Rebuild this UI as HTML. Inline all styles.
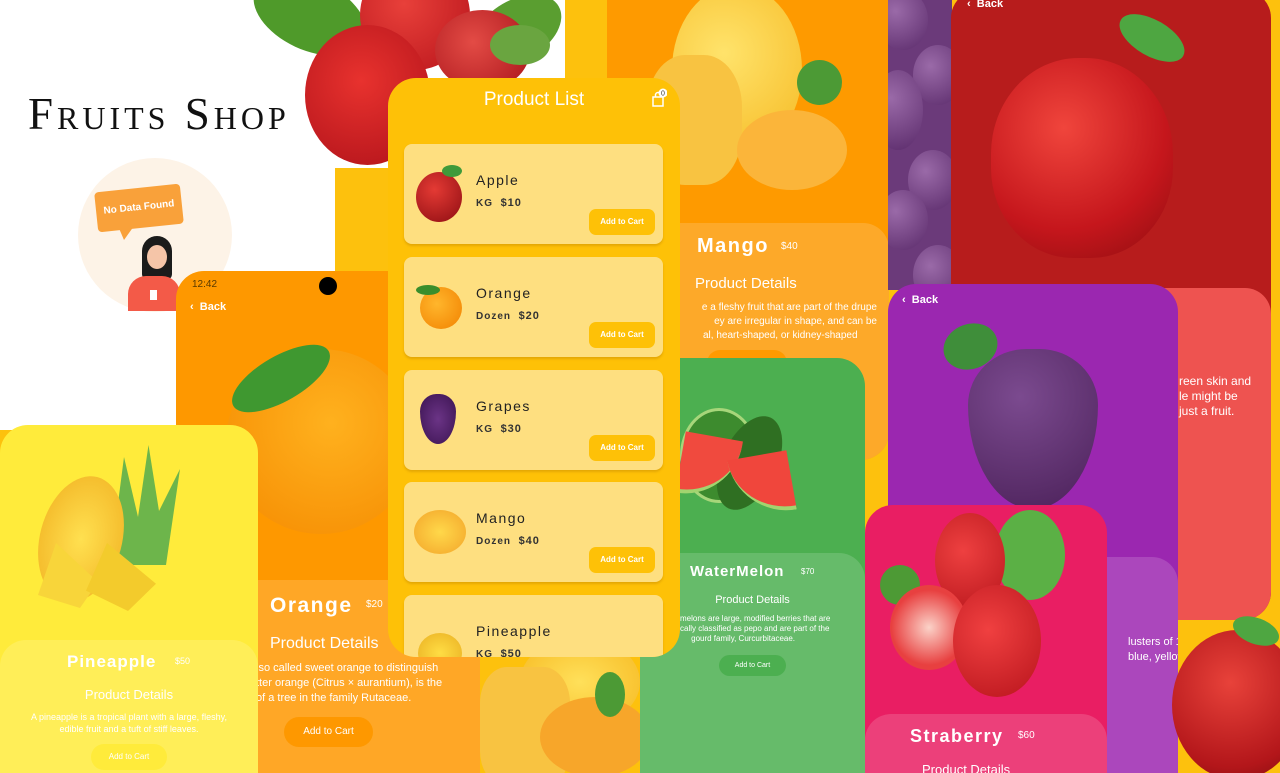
<!DOCTYPE html>
<html style="overflow:hidden;width:1280px;height:773px"><head><meta charset="utf-8"><style>
*{margin:0;padding:0;box-sizing:border-box}
body{width:1280px;height:773px;overflow:hidden;position:relative;background:#fdc10d;font-family:"Liberation Sans",sans-serif}
.a{position:absolute}
.card{position:absolute;overflow:hidden;border-radius:28px}
.panel{position:absolute;left:0;right:0;bottom:0;border-radius:26px 26px 0 0}
.c{text-align:center;color:#fff}
.ball{position:absolute;border-radius:50%}
.item{position:absolute;left:16px;width:259px;height:100px;background:#fedf80;border-radius:8px;box-shadow:0 2px 2px rgba(180,120,0,.35)}
.item .n{position:absolute;left:72px;top:28px;font-size:14px;letter-spacing:1.5px;color:#222}
.item .p{position:absolute;left:72px;top:53px;font-size:10px;letter-spacing:1px;color:#333;font-weight:bold}
.item .p b{font-size:11px}
.btn{position:absolute;right:8px;top:65px;width:66px;height:26px;background:#fec107;border-radius:7px;color:#fff;font-size:8px;font-weight:bold;text-align:center;line-height:26px}
</style></head><body>
<div class="a" style="left:0;top:0;width:335px;height:430px;background:#fff"></div>
<div class="a" style="left:335px;top:0;width:230px;height:168px;background:#fff"></div>

<div class="a" style="left:240px;top:0;width:330px;height:165px">
 <div class="ball" style="left:10px;top:-20px;width:120px;height:70px;background:#4f9a2a;transform:rotate(25deg)"></div>
 <div class="ball" style="left:230px;top:0;width:95px;height:60px;background:#5a9e30;transform:rotate(-30deg)"></div>
 <div class="ball" style="left:120px;top:-40px;width:110px;height:110px;background:radial-gradient(circle at 40% 40%,#e8403a,#b8141b)"></div>
 <div class="ball" style="left:195px;top:10px;width:95px;height:80px;background:radial-gradient(circle at 40% 40%,#e34b45,#a9141a)"></div>
 <div class="ball" style="left:65px;top:25px;width:125px;height:140px;background:radial-gradient(circle at 45% 40%,#e8322e,#b0121a)"></div>
 <div class="ball" style="left:250px;top:25px;width:60px;height:40px;background:#6aa540"></div>
</div>

<div class="a" style="left:28px;top:88px;font-family:'Liberation Serif',serif;font-size:45px;letter-spacing:4px;font-variant:small-caps;color:#111;white-space:nowrap">Fruits Shop</div>

<div class="ball" style="left:78px;top:158px;width:154px;height:154px;background:#fdf3e7"></div>
<div class="a" style="left:96px;top:188px;width:86px;height:40px;background:#f9a13a;border-radius:4px;transform:rotate(-6deg);color:#fff;font-size:10px;font-weight:bold;line-height:40px;text-align:center">No Data Found</div>
<div class="a" style="left:118px;top:226px;width:0;height:0;border-left:6px solid transparent;border-right:10px solid transparent;border-top:14px solid #f9a13a"></div>
<div class="ball" style="left:142px;top:236px;width:30px;height:44px;background:#1b1b1b;border-radius:15px 15px 6px 6px"></div>
<div class="ball" style="left:147px;top:245px;width:20px;height:24px;background:#f5c5a8"></div>
<div class="a" style="left:128px;top:276px;width:52px;height:35px;background:#f35a48;border-radius:18px 18px 0 0"></div>
<div class="a" style="left:150px;top:290px;width:7px;height:10px;background:#fff"></div>

<div class="card" style="left:607px;top:0;width:282px;height:460px;background:#fe9a00;border-radius:0 0 28px 28px">
 <div class="ball" style="left:65px;top:-15px;width:130px;height:170px;background:radial-gradient(circle at 40% 40%,#ffe36b,#f5b820)"></div>
 <div class="ball" style="left:190px;top:60px;width:45px;height:45px;background:#4c9a35"></div>
 <div class="ball" style="left:40px;top:55px;width:95px;height:130px;background:#f8c341;border-radius:40%"></div>
 <div class="ball" style="left:130px;top:110px;width:110px;height:80px;background:#fbb53a"></div>
 <div class="panel" style="top:223px;background:#fda929">
  <div class="a" style="left:90px;top:12px;font-size:20px;font-weight:bold;letter-spacing:1.5px;color:#fff">Mango</div>
  <div class="a" style="left:174px;top:18px;font-size:10px;color:#fff">$40</div>
  <div class="a" style="left:88px;top:52px;font-size:15px;color:#fff">Product Details</div>
  <div class="a" style="top:78px;font-size:10px;line-height:14px;color:#fff;text-align:right;white-space:nowrap;left:-30px;width:300px">e a fleshy fruit that are part of the drupe<br>ey are irregular in shape, and can be<br>al, heart-shaped, or kidney-shaped&nbsp;&nbsp;&nbsp;&nbsp;&nbsp;&nbsp;&nbsp;</div>
  <div class="a" style="left:100px;top:127px;width:80px;height:26px;border-radius:14px;background:#fe9a00"></div>
 </div>
</div>

<div class="a" style="left:888px;top:0;width:64px;height:290px;background:#6b3a7a;overflow:hidden">
 <div class="ball" style="left:-10px;top:-10px;width:50px;height:60px;background:radial-gradient(circle at 35% 35%,#9a6aa8,#5a2a6a)"></div>
 <div class="ball" style="left:25px;top:45px;width:50px;height:60px;background:radial-gradient(circle at 35% 35%,#9a6aa8,#5a2a6a)"></div>
 <div class="ball" style="left:-15px;top:70px;width:50px;height:80px;background:radial-gradient(circle at 35% 35%,#9a6aa8,#5a2a6a)"></div>
 <div class="ball" style="left:20px;top:150px;width:50px;height:60px;background:radial-gradient(circle at 35% 35%,#9a6aa8,#5a2a6a)"></div>
 <div class="ball" style="left:-10px;top:190px;width:50px;height:60px;background:radial-gradient(circle at 35% 35%,#9a6aa8,#5a2a6a)"></div>
 <div class="ball" style="left:25px;top:245px;width:50px;height:60px;background:radial-gradient(circle at 35% 35%,#9a6aa8,#5a2a6a)"></div>
</div>

<div class="card" style="left:951px;top:-10px;width:320px;height:630px;background:#b71c1c">
 <div class="a" style="left:16px;top:8px;font-size:11px;font-weight:bold;color:#fff">‹&nbsp;&nbsp;Back</div>
 <div class="ball" style="left:40px;top:68px;width:182px;height:200px;background:radial-gradient(circle at 40% 35%,#f0453c,#c5161c 60%,#8d0e10);border-radius:48% 48% 45% 45%"></div>
 <div class="ball" style="left:165px;top:30px;width:72px;height:36px;background:#4ea641;transform:rotate(30deg)"></div>
 <div class="panel" style="top:298px;background:#ee5350">
  <div class="a" style="left:228px;top:86px;font-size:12px;line-height:15px;color:#fff;white-space:nowrap">reen skin and<br>le might be<br>just a fruit.</div>
 </div>
</div>

<div class="card" style="left:888px;top:284px;width:290px;height:489px;background:#9b27b0;border-radius:28px 28px 0 0">
 <div class="a" style="left:14px;top:10px;font-size:11px;font-weight:bold;color:#fff">‹&nbsp;&nbsp;Back</div>
 <div class="ball" style="left:55px;top:40px;width:55px;height:45px;background:#3f8e3a;transform:rotate(-20deg)"></div>
 <div class="a" style="left:80px;top:65px;width:130px;height:160px;background:radial-gradient(circle at 40% 30%,#7b4a8f,#4a2058);border-radius:45% 45% 50% 50%/35% 35% 65% 65%"></div>
 <div class="panel" style="top:273px;background:#ab47bc">
  <div class="a" style="left:240px;top:78px;font-size:11px;line-height:15px;color:#fff;white-space:nowrap">lusters of 15<br>blue, yellow,</div>
 </div>
</div>

<div class="ball" style="left:1172px;top:630px;width:130px;height:150px;background:radial-gradient(circle at 45% 35%,#e8423a,#b3161a 70%,#7d0d0e)"></div>
<div class="ball" style="left:1232px;top:618px;width:48px;height:26px;background:#4ea641;transform:rotate(20deg)"></div>

<div class="card" style="left:176px;top:271px;width:304px;height:502px;background:#fe9800;border-radius:28px 0 0 0">
 <div class="a" style="left:16px;top:8px;font-size:10px;color:#5a3a00">12:42</div>
 <div class="ball" style="left:143px;top:6px;width:18px;height:18px;background:#000"></div>
 <div class="a" style="left:14px;top:30px;font-size:11px;font-weight:bold;color:#fff">‹&nbsp;&nbsp;Back</div>
 <div class="ball" style="left:50px;top:78px;width:190px;height:185px;background:radial-gradient(circle at 55% 40%,#ffb11e,#f58a00)"></div>
 <div class="ball" style="left:50px;top:85px;width:110px;height:45px;background:#3f9830;transform:rotate(-30deg)"></div>
 <div class="panel" style="top:309px;background:#ffa726;border-radius:0">
  <div class="a" style="left:94px;top:14px;font-size:21px;font-weight:bold;letter-spacing:1.5px;color:#fff">Orange</div>
  <div class="a" style="left:190px;top:19px;font-size:10px;color:#fff">$20</div>
  <div class="a" style="left:94px;top:55px;font-size:16px;color:#fff">Product Details</div>
  <div class="a" style="left:80px;top:81px;font-size:11px;line-height:15px;color:#fff;white-space:nowrap">lso called sweet orange to distinguish<br>tter orange (Citrus × aurantium), is the<br>of a tree in the family Rutaceae.</div>
  <div class="a" style="left:108px;top:137px;width:89px;height:30px;border-radius:15px;background:#fe9800;color:#fff;font-size:10px;line-height:30px;text-align:center">Add to Cart</div>
 </div>
</div>

<div class="a" style="left:480px;top:657px;width:160px;height:116px;background:#fdc10d;overflow:hidden">
 <div class="ball" style="left:40px;top:-20px;width:120px;height:90px;background:radial-gradient(#ffe05a,#f6b820)"></div>
 <div class="ball" style="left:0;top:10px;width:90px;height:120px;background:#f8c341;border-radius:30%"></div>
 <div class="ball" style="left:60px;top:40px;width:110px;height:80px;background:#f7a62a"></div>
 <div class="ball" style="left:115px;top:15px;width:30px;height:45px;background:#4c9a35"></div>
</div>

<div class="card" style="left:0;top:425px;width:258px;height:348px;background:#ffeb3b;border-radius:28px 28px 0 0">
 <div class="a" style="left:110px;top:20px;width:70px;height:120px;background:#6db54b;clip-path:polygon(0 100%,20% 10%,40% 60%,55% 0,70% 55%,100% 20%,80% 100%)"></div>
 <div class="ball" style="left:40px;top:50px;width:82px;height:128px;background:radial-gradient(#ffe050,#f1b020);transform:rotate(15deg)"></div>
 <div class="a" style="left:38px;top:118px;width:60px;height:65px;background:#f8d53a;clip-path:polygon(30% 0,100% 60%,70% 100%,0 80%)"></div>
 <div class="a" style="left:86px;top:118px;width:70px;height:68px;background:#f3cb2c;clip-path:polygon(30% 0,100% 60%,60% 100%,0 70%)"></div>
 <div class="panel" style="top:215px;background:#ffee58">
  <div class="a" style="left:67px;top:12px;font-size:17px;font-weight:bold;letter-spacing:1px;color:#fff">Pineapple</div>
  <div class="a" style="left:175px;top:16px;font-size:9px;color:#fff">$50</div>
  <div class="c a" style="left:0;width:258px;top:47px;font-size:13px">Product Details</div>
  <div class="c a" style="left:0;width:258px;top:71px;font-size:9px;line-height:12px">A pineapple is a tropical plant with a large, fleshy,<br>edible fruit and a tuft of stiff leaves.</div>
  <div class="a" style="left:91px;top:104px;width:76px;height:26px;border-radius:13px;background:#ffeb3b;color:#fff;font-size:8px;line-height:26px;text-align:center">Add to Cart</div>
 </div>
</div>

<div class="card" style="left:640px;top:358px;width:225px;height:415px;background:#4caf50;border-radius:28px 28px 0 0">
 <div class="ball" style="left:40px;top:50px;width:78px;height:95px;background:#3d8b2e;border:3px solid #a7d67a"></div>
 <div class="ball" style="left:82px;top:55px;width:55px;height:100px;background:#2f6f22;transform:rotate(25deg)"></div>
 <div class="a" style="left:40px;top:78px;width:58px;height:62px;background:#f04a3e;border-radius:0 0 60px 0;border-bottom:4px solid #a2d46f;transform:rotate(10deg)"></div>
 <div class="a" style="left:92px;top:97px;width:60px;height:60px;background:#f0463c;border-radius:0 0 0 60px;border-bottom:4px solid #a2d46f;transform:rotate(-10deg)"></div>
 <div class="panel" style="top:195px;background:#66bb6a">
  <div class="a" style="left:50px;top:10px;font-size:15px;font-weight:bold;letter-spacing:1px;color:#fff">WaterMelon</div>
  <div class="a" style="left:161px;top:14px;font-size:8px;color:#fff">$70</div>
  <div class="c a" style="left:0;width:225px;top:41px;font-size:11px">Product Details</div>
  <div class="a" style="left:40px;top:61px;font-size:8px;line-height:10px;white-space:nowrap;color:#fff">melons are large, modified berries that are<br>cally classified as pepo and are part of the<br>&nbsp;&nbsp;&nbsp;&nbsp;&nbsp;gourd family, Curcurbitaceae.</div>
  <div class="a" style="left:79px;top:102px;width:67px;height:21px;border-radius:11px;background:#4caf50;color:#fff;font-size:7px;line-height:21px;text-align:center">Add to Cart</div>
 </div>
</div>

<div class="card" style="left:388px;top:78px;width:292px;height:579px;background:#fec107">
 <div class="a" style="left:0;width:292px;top:11px;text-align:center;color:#fff;font-size:19px">Product List</div>
 <svg class="a" style="left:263px;top:10px" width="16" height="20" viewBox="0 0 16 20"><path d="M2 9h10v9H2z" fill="none" stroke="#fff" stroke-width="1.5"/><path d="M4.5 9V7a2.5 2.5 0 015 0v2" fill="none" stroke="#fff" stroke-width="1.5"/><circle cx="12" cy="5" r="4.5" fill="#fff"/><text x="12" y="7.5" font-size="7" text-anchor="middle" fill="#333" font-family="Liberation Sans">0</text></svg>
 <div class="item" style="top:66px">
  <div class="ball" style="left:12px;top:28px;width:46px;height:50px;background:radial-gradient(circle at 40% 35%,#e43a34,#8e0d12)"></div>
  <div class="ball" style="left:38px;top:21px;width:20px;height:12px;background:#3f9a3a"></div>
  <div class="n">Apple</div><div class="p">KG&nbsp;&nbsp;<b>$10</b></div><div class="btn">Add to Cart</div></div>
 <div class="item" style="top:179px">
  <div class="ball" style="left:16px;top:30px;width:42px;height:42px;background:radial-gradient(circle at 40% 40%,#ffb62c,#f28200)"></div>
  <div class="ball" style="left:12px;top:28px;width:24px;height:10px;background:#3a8e2c"></div>
  <div class="n">Orange</div><div class="p">Dozen&nbsp;&nbsp;<b>$20</b></div><div class="btn">Add to Cart</div></div>
 <div class="item" style="top:292px">
  <div class="ball" style="left:16px;top:24px;width:36px;height:50px;background:radial-gradient(#6b3486,#3b1351);border-radius:45% 45% 50% 50%/35% 35% 65% 65%"></div>
  <div class="n">Grapes</div><div class="p">KG&nbsp;&nbsp;<b>$30</b></div><div class="btn">Add to Cart</div></div>
 <div class="item" style="top:404px">
  <div class="ball" style="left:10px;top:28px;width:52px;height:44px;background:radial-gradient(#ffd84a,#f3a52a)"></div>
  <div class="n">Mango</div><div class="p">Dozen&nbsp;&nbsp;<b>$40</b></div><div class="btn">Add to Cart</div></div>
 <div class="item" style="top:517px">
  <div class="ball" style="left:14px;top:38px;width:44px;height:40px;background:radial-gradient(#ffdd44,#eab022)"></div>
  <div class="n">Pineapple</div><div class="p">KG&nbsp;&nbsp;<b>$50</b></div></div>
</div>

<div class="card" style="left:865px;top:505px;width:242px;height:268px;background:#e91e63;border-radius:28px 28px 0 0">
 <div class="ball" style="left:130px;top:5px;width:70px;height:90px;background:#5bb045"></div>
 <div class="ball" style="left:70px;top:8px;width:70px;height:95px;background:radial-gradient(circle at 40% 40%,#ee4040,#b8161c)"></div>
 <div class="ball" style="left:15px;top:60px;width:40px;height:40px;background:#4d9a35"></div>
 <div class="ball" style="left:25px;top:80px;width:78px;height:85px;background:radial-gradient(circle at 50% 50%,#fbd2c8,#e84040 65%)"></div>
 <div class="ball" style="left:88px;top:80px;width:88px;height:112px;background:radial-gradient(circle at 40% 40%,#f04040,#b8141c)"></div>
 <div class="panel" style="top:209px;background:#ec407a">
  <div class="a" style="left:45px;top:12px;font-size:18px;font-weight:bold;letter-spacing:1.5px;color:#fff">Straberry</div>
  <div class="a" style="left:153px;top:16px;font-size:10px;color:#fff">$60</div>
  <div class="a" style="left:57px;top:48px;font-size:13px;color:#fff">Product Details</div>
 </div>
</div>
</body></html>
